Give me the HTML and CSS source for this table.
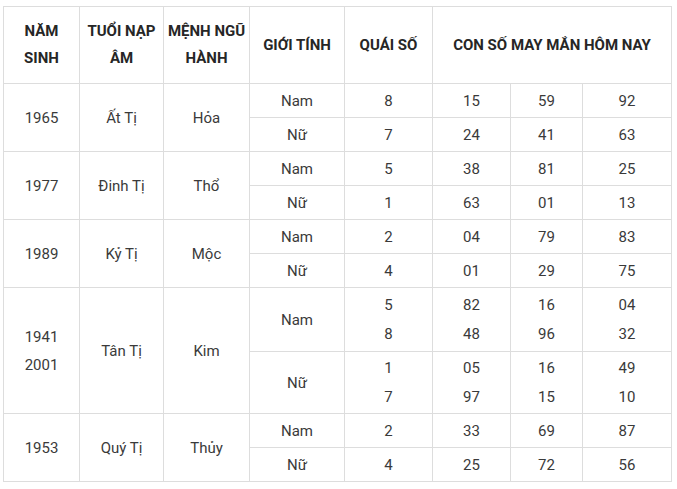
FILE: index.html
```html
<!DOCTYPE html>
<html lang="vi">
<head>
<meta charset="utf-8">
<link rel="stylesheet" href="styles.css">
</head>
<body>
<table class="lucky">
  <colgroup>
    <col class="c1"><col class="c2"><col class="c3"><col class="c4"><col class="c5"><col class="c6"><col class="c7"><col class="c8">
  </colgroup>
  <thead>
    <tr class="head">
      <th>NĂM<br>SINH</th>
      <th>TUỔI NẠP<br>ÂM</th>
      <th>MỆNH NGŨ<br>HÀNH</th>
      <th>GIỚI TÍNH</th>
      <th>QUÁI SỐ</th>
      <th colspan="3">CON SỐ MAY MẮN HÔM NAY</th>
    </tr>
  </thead>
  <tbody>
    <tr class="r"><td rowspan="2">1965</td><td rowspan="2">Ất Tị</td><td rowspan="2">Hỏa</td><td>Nam</td><td>8</td><td>15</td><td>59</td><td>92</td></tr>
    <tr class="r"><td>Nữ</td><td>7</td><td>24</td><td>41</td><td>63</td></tr>
    <tr class="r"><td rowspan="2">1977</td><td rowspan="2">Đinh Tị</td><td rowspan="2">Thổ</td><td>Nam</td><td>5</td><td>38</td><td>81</td><td>25</td></tr>
    <tr class="r"><td>Nữ</td><td>1</td><td>63</td><td>01</td><td>13</td></tr>
    <tr class="r"><td rowspan="2">1989</td><td rowspan="2">Kỷ Tị</td><td rowspan="2">Mộc</td><td>Nam</td><td>2</td><td>04</td><td>79</td><td>83</td></tr>
    <tr class="r"><td>Nữ</td><td>4</td><td>01</td><td>29</td><td>75</td></tr>
    <tr class="r2a"><td rowspan="2" class="two-year">1941<br>2001</td><td rowspan="2">Tân Tị</td><td rowspan="2">Kim</td><td>Nam</td><td class="two">5<br>8</td><td class="two">82<br>48</td><td class="two">16<br>96</td><td class="two">04<br>32</td></tr>
    <tr class="r2b"><td>Nữ</td><td class="two">1<br>7</td><td class="two">05<br>97</td><td class="two">16<br>15</td><td class="two">49<br>10</td></tr>
    <tr class="r"><td rowspan="2">1953</td><td rowspan="2">Quý Tị</td><td rowspan="2">Thủy</td><td>Nam</td><td>2</td><td>33</td><td>69</td><td>87</td></tr>
    <tr class="r"><td>Nữ</td><td>4</td><td>25</td><td>72</td><td>56</td></tr>
  </tbody>
</table>
</body>
</html>
```
FILE: styles.css
```css
html, body {
  margin: 0;
  background: #ffffff;
}
body {
  padding: 6px 0 0 3px;
  font-family: Roboto, "Liberation Sans", Arial, sans-serif;
  font-size: 15px;
  color: #3a3a3a;
}
.lucky {
  border-collapse: collapse;
  table-layout: fixed;
  width: 669px;
}
.c1 { width: 76px; }
.c2 { width: 84px; }
.c3 { width: 86px; }
.c4 { width: 95px; }
.c5 { width: 88px; }
.c6 { width: 78px; }
.c7 { width: 72px; }
.c8 { width: 89px; }
.lucky th, .lucky td {
  border: 1px solid #dddddd;
  padding: 0;
  text-align: center;
  vertical-align: middle;
}
.lucky th {
  font-weight: 700;
  color: #262626;
  line-height: 27px;
  height: 76px;
}
.lucky td {
  line-height: 20px;
}
.r td { height: 33px; }
.r2a > td { height: 63px; }
.r2b > td { height: 61px; }
.lucky td.two { line-height: 29px; }
.lucky td.two-year { line-height: 28px; }
```
